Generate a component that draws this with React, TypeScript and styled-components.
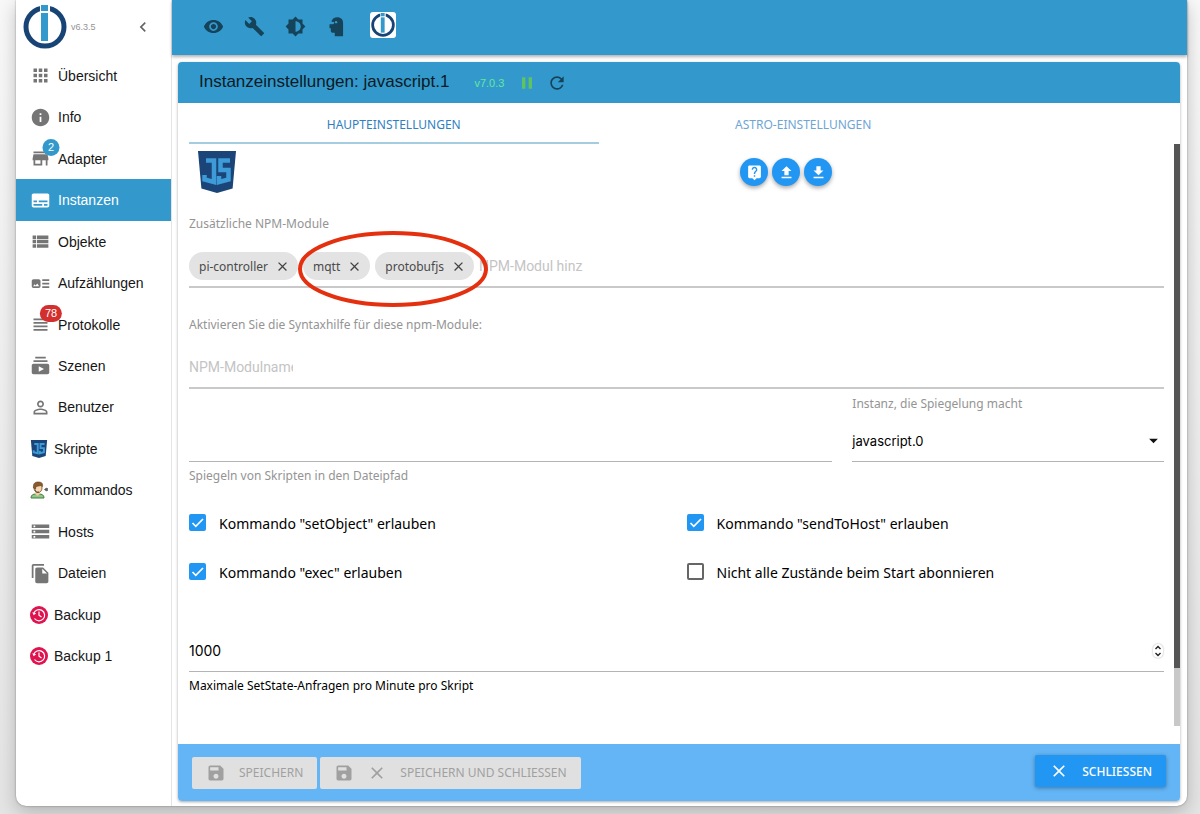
import React from 'react';
import styled, { createGlobalStyle, css } from 'styled-components';
import {
  MdApps,
  MdArrowDropDown,
  MdArtTrack,
  MdBrightness6,
  MdBuild,
  MdChevronLeft,
  MdClose,
  MdFileDownload,
  MdFileUpload,
  MdInfo,
  MdPause,
  MdPersonOutline,
  MdRefresh,
  MdStorage,
  MdViewHeadline,
  MdViewList,
  MdVisibility,
} from 'react-icons/md';

const sans = '"Liberation Sans", Arial, sans-serif';
const humanist = '"Noto Sans", "Open Sans", sans-serif';

const GlobalStyle = createGlobalStyle`
  * { box-sizing: border-box; }
  body {
    margin: 0;
    background: #f3f3f3;
    font-family: ${sans};
    color: #111;
  }
  button, input, select { font: inherit; color: inherit; }
  ul { list-style: none; margin: 0; padding: 0; }
`;

const Page = styled.div`
  display: flex;
  min-height: 100vh;
  padding: 0 13px 8px 16px;
  background: linear-gradient(to bottom, #f8f8f8, #ececec 60%, #e4e4e4);
`;

const AppWindow = styled.div`
  display: flex;
  flex: 1;
  min-width: 0;
  background: #fff;
  border-radius: 0 0 10px 10px;
  box-shadow: 0 0 2px rgba(0, 0, 0, 0.4), 0 6px 18px rgba(0, 0, 0, 0.22);
`;

/* Sidebar */

const Sidebar = styled.nav`
  flex: none;
  width: 156px;
  border-right: 1px solid #e4e4e4;
`;

const SidebarHeader = styled.div`
  display: flex;
  align-items: center;
  height: 55px;
  padding: 0 18px 2px 7px;
`;

const AppVersion = styled.span`
  flex: 1;
  padding-left: 4px;
  font-size: 9px;
  color: #949494;
`;

const CollapseButton = styled.button`
  display: flex;
  padding: 0;
  border: 0;
  background: none;
  color: #666;
  font-size: 20px;
`;

const MenuList = styled.ul`
  display: grid;
  grid-auto-rows: 1fr;
  min-height: 622px;
`;

const MenuLink = styled.a<{ $active?: boolean; $instance?: boolean }>`
  display: flex;
  align-items: center;
  gap: ${p => (p.$instance ? 6 : 7)}px;
  height: 100%;
  padding-left: 14px;
  font-size: 14px;
  text-decoration: none;
  color: ${p => (p.$active ? '#fff' : '#161616')};
  background: ${p => (p.$active ? '#3399cc' : 'transparent')};
`;

const MenuIcon = styled.span<{ $active?: boolean }>`
  position: relative;
  display: flex;
  color: ${p => (p.$active ? '#fff' : '#757575')};
  font-size: 21px;
`;

const Badge = styled.span<{ $color: string }>`
  position: absolute;
  left: 100%;
  top: -9px;
  min-width: 17px;
  height: 17px;
  padding: 0 5px;
  border-radius: 9px;
  background: ${p => p.$color};
  color: #fff;
  font-size: 11px;
  line-height: 17px;
  text-align: center;
  transform: translateX(-50%);
`;

/* Main area */

const Main = styled.main`
  display: flex;
  flex-direction: column;
  flex: 1;
  min-width: 0;
`;

const Toolbar = styled.header`
  display: flex;
  align-items: center;
  gap: 20px;
  height: 55px;
  padding: 0 0 2px 31px;
  background: #3399cc;
  color: #15435a;
  box-shadow: 0 2px 3px rgba(0, 0, 0, 0.3);
`;

const ToolButton = styled.button`
  display: flex;
  padding: 0;
  border: 0;
  background: none;
  font-size: 21px;
`;

const HostLogo = styled.a`
  display: flex;
  margin: 0 0 4px 3px;
  padding: 1px;
  border-radius: 3px;
  background: #fff;
`;

const Card = styled.section`
  display: flex;
  flex-direction: column;
  flex: 1;
  margin: 7px 7px 5px 6px;
  border-radius: 4px;
  box-shadow: 0 1px 3px rgba(0, 0, 0, 0.35);
`;

const CardHeader = styled.div`
  display: flex;
  align-items: center;
  height: 41px;
  padding-left: 21px;
  border-radius: 4px 4px 0 0;
  background: #3399cc;
`;

const CardTitle = styled.h1`
  margin: 0 25px 2px 0;
  font-size: 17px;
  font-weight: 400;
  color: #0b1a24;
`;

const InstanceVersion = styled.span`
  margin-right: 13px;
  font-size: 11px;
  color: #62e89a;
`;

const HeaderButton = styled.button<{ $color: string }>`
  display: flex;
  margin-right: 10px;
  padding: 0;
  border: 0;
  background: none;
  color: ${p => p.$color};
  font-size: 20px;
`;

const CardBody = styled.div`
  display: flex;
  flex: 1;
  padding-left: 11px;
  font-family: ${humanist};
`;

const Content = styled.div`
  flex: 1;
  min-width: 0;
`;

const ScrollTrack = styled.div`
  display: flex;
  flex-direction: column;
  width: 6px;
  margin: 41px 0 18px 10px;
  background: #c8c8c8;
`;

const ScrollThumb = styled.div`
  height: 90%;
  background: #555;
`;

const Tabs = styled.div`
  display: flex;
  height: 41px;
`;

const Tab = styled.button<{ $active?: boolean }>`
  width: 42%;
  padding: 3px 0 0;
  border: 0;
  border-bottom: 2px solid ${p => (p.$active ? '#a5cde2' : 'transparent')};
  background: none;
  font-size: 12px;
  color: ${p => (p.$active ? '#2f7fc1' : '#6fa5d4')};
`;

const LogoRow = styled.div`
  display: grid;
  grid-template-columns: 552fr 424fr;
  align-items: center;
  height: 56px;
`;

const AdapterLogo = styled.div`
  display: flex;
  padding-left: 9px;
`;

const RoundButtons = styled.div`
  display: flex;
  gap: 4px;
`;

const RoundButton = styled.button`
  display: grid;
  place-items: center;
  width: 28px;
  height: 28px;
  padding: 0;
  border: 0;
  border-radius: 50%;
  background: #2196f3;
  color: #fff;
  font-size: 17px;
  box-shadow: 0 2px 4px rgba(0, 0, 0, 0.35);
`;

const Caption = styled.label`
  display: block;
  font-size: 12px;
  line-height: 16px;
  color: #949494;
`;

const ModuleField = styled.div<{ $tall?: boolean }>`
  padding-top: ${p => (p.$tall ? 29 : 16)}px;
`;

const ChipLine = styled.div`
  position: relative;
  display: flex;
  align-items: center;
  gap: 5px;
  height: 56px;
  padding-top: 14px;
  border-bottom: 2px solid #c9c9c9;
`;

const Chip = styled.span`
  display: flex;
  align-items: center;
  gap: 7px;
  height: 28px;
  padding: 0 8px 0 10px;
  border-radius: 14px;
  background: #e3e3e3;
  color: #4a4a4a;
  font-size: 12px;
`;

const ChipRemove = styled.button`
  display: flex;
  padding: 0;
  border: 0;
  background: none;
  color: #444;
  font-size: 15px;
`;

const ModuleInput = styled.input`
  width: 104px;
  padding: 0;
  border: 0;
  outline: 0;
  background: none;
  font-family: Roboto, ${humanist};
  font-size: 14px;
  &::placeholder { color: #c4c4c4; opacity: 1; }
`;

const Marker = styled.svg`
  position: absolute;
  left: 108px;
  top: -3px;
  pointer-events: none;
`;

const MirrorRow = styled.div`
  display: grid;
  grid-template-columns: repeat(3, 1fr);
  column-gap: 20px;
  padding-top: 7px;
`;

const MirrorField = styled.div<{ $span?: number }>`
  display: flex;
  flex-direction: column;
  grid-column: span ${p => p.$span ?? 1};
`;

const lineControl = css`
  width: 100%;
  padding: 0;
  border: 0;
  outline: 0;
  background: none;
  font-size: 14px;
  color: #000;
`;

const PathInput = styled.input`
  ${lineControl}
  height: 66px;
  margin-bottom: 6px;
  padding-top: 24px;
  border-bottom: 1px solid #b4b4b4;
`;

const SelectWrap = styled.div`
  display: grid;
  grid-template-columns: 1fr 21px;
  align-items: center;
  height: 50px;
  padding-top: 8px;
  border-bottom: 1px solid #b4b4b4;
`;

const Select = styled.select`
  ${lineControl}
  grid-area: 1 / 1 / 2 / 3;
  height: 30px;
  appearance: none;
  font-family: Inter, ${humanist};
  font-size: 13px;
`;

const SelectArrow = styled(MdArrowDropDown)`
  grid-area: 1 / 2;
  font-size: 21px;
  pointer-events: none;
`;

const CheckGrid = styled.div`
  display: grid;
  grid-template-columns: 1fr 1fr;
  gap: 30px 20px;
  padding-top: 30px;
`;

const CheckLabel = styled.label`
  display: flex;
  align-items: center;
  gap: 13px;
  font-size: 14px;
  line-height: 19px;
  color: #000;
`;

const CheckBox = styled.span`
  display: grid;
  width: 17px;
  height: 17px;
  margin-bottom: 2px;
  input {
    grid-area: 1 / 1;
    appearance: none;
    width: 17px;
    height: 17px;
    margin: 0;
    border: 2px solid #666;
    border-radius: 2px;
  }
  input:checked { border-color: #2196f3; background: #2196f3; }
  svg { grid-area: 1 / 1; visibility: hidden; pointer-events: none; }
  input:checked + svg { visibility: visible; }
`;

const NumberField = styled.div`
  padding-top: 48px;
`;

const NumberLine = styled.div`
  display: flex;
  align-items: center;
  height: 42px;
  margin-bottom: 6px;
  border-bottom: 1px solid #b4b4b4;
`;

const NumberInput = styled.input`
  ${lineControl}
  appearance: textfield;
  font-family: Inter, ${humanist};
  &::-webkit-inner-spin-button { appearance: none; margin: 0; }
`;

const Stepper = styled.div`
  display: flex;
  flex-direction: column;
  margin-right: 1px;
  border-radius: 5px;
  box-shadow: 0 0 2px rgba(0, 0, 0, 0.35);
`;

const StepButton = styled.button`
  display: grid;
  place-items: center;
  width: 10px;
  height: 7px;
  padding: 0;
  border: 0;
  background: none;
`;

const HelperText = styled(Caption)`
  color: #000;
`;

/* Footer */

const Footer = styled.footer`
  display: flex;
  align-items: center;
  gap: 3px;
  height: 57px;
  padding: 0 14px;
  border-radius: 0 0 4px 4px;
  background: #64b5f6;
  font-family: ${humanist};
`;

const FooterButton = styled.button<{ $primary?: boolean }>`
  display: flex;
  align-items: center;
  gap: 13px;
  height: 32px;
  padding: 0 14px;
  border: 0;
  border-radius: 2px;
  background: #e0e0e0;
  color: #a0a0a0;
  font-size: 12px;
  white-space: nowrap;
  svg { font-size: 20px; }
  ${p =>
    p.$primary &&
    css`
      margin: 0 0 3px auto;
      background: #2196f3;
      color: #fff;
      font-weight: 500;
      box-shadow: 0 1px 4px rgba(0, 0, 0, 0.35);
    `}
`;

/* Drawings */

const Glyph = ({ d }: { d: string }) => (
  <svg width="1em" height="1em" viewBox="0 0 24 24" fill="currentColor" aria-hidden="true">
    <path d={d} />
  </svg>
);

const storePath = 'M20 4H4v2h16V4zm1 10v-2l-1-5H4l-1 5v2h1v6h10v-6h4v6h2v-6h1zm-9 4H6v-4h6v4z';
const subtitlesPath =
  'M20 4H4c-1.100 0-2 .9-2 2v12c0 1.100.9 2 2 2h16c1.100 0 2-.9 2-2V6c0-1.100-.9-2-2-2zM4 12h4v2H4v-2zm10 6H4v-2h10v2zm6 0h-4v-2h4v2zm0-4H10v-2h10v2z';
const subscriptionsPath =
  'M20 8H4V6h16v2zm-2-6H6v2h12V2zm4 10v8c0 1.100-.9 2-2 2H4c-1.100 0-2-.9-2-2v-8c0-1.100.9-2 2-2h16c1.100 0 2 .9 2 2zm-6 4l-6-3.270v6.530L16 16z';
const filesPath =
  'M16 1H4c-1.100 0-2 .9-2 2v14h2V3h12V1zm-1 4l6 6v10c0 1.100-.9 2-2 2H8c-1.100 0-2-.9-2-2V7c0-1.100.9-2 2-2h7zm-1 7h5.500L14 6.500V12z';
const helpPath =
  'M19 2H5c-1.110 0-2 .9-2 2v14c0 1.100.890 2 2 2h4l3 3 3-3h4c1.100 0 2-.9 2-2V4c0-1.100-.9-2-2-2zm-6 16h-2v-2h2v2zm2.070-7.750l-.9.920C13.450 11.900 13 12.500 13 14h-2v-.5c0-1.100.450-2.100 1.170-2.830l1.240-1.260c.370-.360.590-.860.590-1.410 0-1.100-.9-2-2-2s-2 .9-2 2H8c0-2.210 1.790-4 4-4s4 1.790 4 4c0 .880-.360 1.680-.930 2.250z';
const savePath =
  'M17 3H5c-1.110 0-2 .9-2 2v14c0 1.100.890 2 2 2h14c1.100 0 2-.9 2-2V7l-4-4zm-5 16c-1.660 0-3-1.340-3-3s1.340-3 3-3 3 1.340 3 3-1.340 3-3 3zm3-10H5V5h10v4z';

const BrokerLogo = ({ size }: { size: number }) => (
  <svg width={size} height={size} viewBox="0 0 44 44" aria-hidden="true">
    <circle cx="22" cy="22" r="19" fill="none" stroke="#174475" strokeWidth="5" />
    <rect x="17" y="0" width="10" height="8" fill="#fff" />
    <rect x="16" y="8" width="12" height="28" fill="#fff" />
    <rect x="18" y="0" width="7" height="6" fill="#3399cc" />
    <rect x="18" y="8" width="7" height="28" fill="#3399cc" />
  </svg>
);

const JsShield = ({ width, height }: { width: number; height: number }) => (
  <svg width={width} height={height} viewBox="0 0 38 42" aria-hidden="true">
    <path d="M0 0h38l-3.400 37.500L19 42 3.400 37.500z" fill="#1b4478" />
    <path
      d="M8 9.500H16V31L6.500 28.500V24M32 9.500H22.500V19H30.500V28.500L21 31V25"
      fill="none"
      stroke="#3d9bd8"
      strokeWidth="4.500"
    />
  </svg>
);

const CommandIcon = () => (
  <svg width="18" height="18" viewBox="0 0 18 18" aria-hidden="true">
    <path d="M1 17c0-3 2-4 5-4h3c3 0 5 1 5 4z" fill="#8bc98a" stroke="#4b7a3c" />
    <path d="M5 10h5v3l-2.500 2L5 13z" fill="#f2c9a0" />
    <ellipse cx="8" cy="7" rx="4" ry="4.600" fill="#f7d5b0" stroke="#7a4a20" strokeWidth=".8" />
    <path d="M3.500 7C3 3 4.500 1 8 1c4 0 5 1.500 4.500 4.500L11 4.500 6 5.500 5.500 8z" fill="#8a5a2b" stroke="#5a3a1a" strokeWidth=".6" />
    <path d="M5 8.500c0 2 2 3 4 2.500" fill="none" stroke="#444" />
    <path d="M14.500 8.500l2-1.500v3zM17.500 7v3" fill="#555" stroke="#555" strokeWidth=".8" />
  </svg>
);

const BackupIcon = () => (
  <svg width="18" height="18" viewBox="0 0 18 18" aria-hidden="true">
    <circle cx="9" cy="9" r="9" fill="#e0134f" />
    <path d="M3.700 7.500a5.600 5.600 0 1 1 .8 5" fill="none" stroke="#fff" strokeWidth="1.200" />
    <path d="M2.300 6.300l1.300 3 2.600-2z" fill="#fff" />
    <path d="M9 5.500V9.300L11.500 11" fill="none" stroke="#fff" strokeWidth="1.200" />
  </svg>
);

const ExpertIcon = () => (
  <svg width="1em" height="1em" viewBox="0 0 24 24" aria-hidden="true">
    <path
      d="M13 1.500C9.500 1.500 7 3.300 6.200 6.200L8 7.500 7.500 9.500 4 9.500V14h1.500v3c0 1.200.8 2 2 2H10v4h9.500V8c0-4-2.500-6.500-6.500-6.500z"
      fill="currentColor"
    />
    <circle cx="8" cy="8" r="1.300" fill="#3399cc" />
    <circle cx="11.500" cy="7" r="1.400" fill="#3399cc" />
  </svg>
);

const Tick = () => (
  <svg width="17" height="17" viewBox="0 0 17 17" aria-hidden="true">
    <path d="M3.500 9l3.300 3.300L14 5" fill="none" stroke="#fff" strokeWidth="1.700" />
  </svg>
);

const Chevron = ({ up }: { up?: boolean }) => (
  <svg width="8" height="5" viewBox="0 0 8 5" aria-hidden="true">
    <path d={up ? 'M1.500 4L4 1.500 6.500 4' : 'M1.500 1L4 3.500 6.500 1'} fill="none" stroke="#222" strokeWidth="1.400" />
  </svg>
);

type MenuEntry = {
  label: string;
  icon: React.ReactNode;
  active?: boolean;
  instance?: boolean;
  badge?: { text: string; color: string };
};

const menu: MenuEntry[] = [
  { label: 'Übersicht', icon: <MdApps /> },
  { label: 'Info', icon: <MdInfo /> },
  { label: 'Adapter', icon: <Glyph d={storePath} />, badge: { text: '2', color: '#3399cc' } },
  { label: 'Instanzen', icon: <Glyph d={subtitlesPath} />, active: true },
  { label: 'Objekte', icon: <MdViewList /> },
  { label: 'Aufzählungen', icon: <MdArtTrack /> },
  { label: 'Protokolle', icon: <MdViewHeadline />, badge: { text: '78', color: '#d32f2f' } },
  { label: 'Szenen', icon: <Glyph d={subscriptionsPath} /> },
  { label: 'Benutzer', icon: <MdPersonOutline /> },
  { label: 'Skripte', icon: <JsShield width={18} height={18} />, instance: true },
  { label: 'Kommandos', icon: <CommandIcon />, instance: true },
  { label: 'Hosts', icon: <MdStorage /> },
  { label: 'Dateien', icon: <Glyph d={filesPath} /> },
  { label: 'Backup', icon: <BackupIcon />, instance: true },
  { label: 'Backup 1', icon: <BackupIcon />, instance: true },
];

const tools = [
  { label: 'Sichtbarkeit', icon: <MdVisibility /> },
  { label: 'Werkzeuge', icon: <MdBuild /> },
  { label: 'Farbschema', icon: <MdBrightness6 /> },
  { label: 'Expertenmodus', icon: <ExpertIcon /> },
];

const options = [
  { label: 'Kommando "setObject" erlauben', checked: true },
  { label: 'Kommando "sendToHost" erlauben', checked: true },
  { label: 'Kommando "exec" erlauben', checked: true },
  { label: 'Nicht alle Zustände beim Start abonnieren', checked: false },
];

export default function App() {
  return (
    <>
      <GlobalStyle />
      <Page>
        <AppWindow>
          <Sidebar>
            <SidebarHeader>
              <BrokerLogo size={44} />
              <AppVersion>v6.3.5</AppVersion>
              <CollapseButton aria-label="Menü einklappen">
                <MdChevronLeft />
              </CollapseButton>
            </SidebarHeader>
            <MenuList>
              {menu.map(m => (
                <li key={m.label}>
                  <MenuLink href="#" $active={m.active} $instance={m.instance}>
                    <MenuIcon $active={m.active}>
                      {m.icon}
                      {m.badge && <Badge $color={m.badge.color}>{m.badge.text}</Badge>}
                    </MenuIcon>
                    {m.label}
                  </MenuLink>
                </li>
              ))}
            </MenuList>
          </Sidebar>

          <Main>
            <Toolbar>
              {tools.map(t => (
                <ToolButton key={t.label} aria-label={t.label}>
                  {t.icon}
                </ToolButton>
              ))}
              <HostLogo href="#" aria-label="Host">
                <BrokerLogo size={24} />
              </HostLogo>
            </Toolbar>

            <Card>
              <CardHeader>
                <CardTitle>Instanzeinstellungen: javascript.1</CardTitle>
                <InstanceVersion>v7.0.3</InstanceVersion>
                <HeaderButton $color="#5fc35f" aria-label="Anhalten">
                  <MdPause />
                </HeaderButton>
                <HeaderButton $color="#15435a" aria-label="Neu starten">
                  <MdRefresh />
                </HeaderButton>
              </CardHeader>

              <CardBody>
                <Content>
                  <Tabs role="tablist">
                    <Tab role="tab" aria-selected="true" $active>
                      HAUPTEINSTELLUNGEN
                    </Tab>
                    <Tab role="tab" aria-selected="false">
                      ASTRO-EINSTELLUNGEN
                    </Tab>
                  </Tabs>

                  <LogoRow>
                    <AdapterLogo>
                      <JsShield width={38} height={42} />
                    </AdapterLogo>
                    <RoundButtons>
                      <RoundButton aria-label="Hilfe">
                        <Glyph d={helpPath} />
                      </RoundButton>
                      <RoundButton aria-label="Hochladen">
                        <MdFileUpload />
                      </RoundButton>
                      <RoundButton aria-label="Herunterladen">
                        <MdFileDownload />
                      </RoundButton>
                    </RoundButtons>
                  </LogoRow>

                  <ModuleField>
                    <Caption htmlFor="npm">Zusätzliche NPM-Module</Caption>
                    <ChipLine>
                      {['pi-controller', 'mqtt', 'protobufjs'].map(name => (
                        <Chip key={name}>
                          {name}
                          <ChipRemove aria-label={`${name} entfernen`}>
                            <MdClose />
                          </ChipRemove>
                        </Chip>
                      ))}
                      <ModuleInput id="npm" placeholder="NPM-Modul hinz" />
                      <Marker width="192" height="80" viewBox="0 0 192 80" aria-hidden="true">
                        <ellipse cx="96" cy="40" rx="93" ry="36" fill="none" stroke="#e5300f" strokeWidth="4" />
                      </Marker>
                    </ChipLine>
                  </ModuleField>

                  <ModuleField $tall>
                    <Caption htmlFor="syntax">Aktivieren Sie die Syntaxhilfe für diese npm-Module:</Caption>
                    <ChipLine>
                      <ModuleInput id="syntax" placeholder="NPM-Modulname" />
                    </ChipLine>
                  </ModuleField>

                  <MirrorRow>
                    <MirrorField $span={2}>
                      <PathInput id="mirror" />
                      <Caption htmlFor="mirror">Spiegeln von Skripten in den Dateipfad</Caption>
                    </MirrorField>
                    <MirrorField>
                      <Caption htmlFor="instance">Instanz, die Spiegelung macht</Caption>
                      <SelectWrap>
                        <Select id="instance">
                          <option>javascript.0</option>
                        </Select>
                        <SelectArrow />
                      </SelectWrap>
                    </MirrorField>
                  </MirrorRow>

                  <CheckGrid>
                    {options.map(o => (
                      <CheckLabel key={o.label}>
                        <CheckBox>
                          <input type="checkbox" defaultChecked={o.checked} />
                          <Tick />
                        </CheckBox>
                        {o.label}
                      </CheckLabel>
                    ))}
                  </CheckGrid>

                  <NumberField>
                    <NumberLine>
                      <NumberInput id="limit" type="number" defaultValue={1000} />
                      <Stepper>
                        <StepButton aria-label="Erhöhen">
                          <Chevron up />
                        </StepButton>
                        <StepButton aria-label="Verringern">
                          <Chevron />
                        </StepButton>
                      </Stepper>
                    </NumberLine>
                    <HelperText htmlFor="limit">Maximale SetState-Anfragen pro Minute pro Skript</HelperText>
                  </NumberField>
                </Content>
                <ScrollTrack>
                  <ScrollThumb />
                </ScrollTrack>
              </CardBody>

              <Footer>
                <FooterButton disabled>
                  <Glyph d={savePath} />
                  SPEICHERN
                </FooterButton>
                <FooterButton disabled>
                  <Glyph d={savePath} />
                  <MdClose />
                  SPEICHERN UND SCHLIESSEN
                </FooterButton>
                <FooterButton $primary>
                  <MdClose />
                  SCHLIESSEN
                </FooterButton>
              </Footer>
            </Card>
          </Main>
        </AppWindow>
      </Page>
    </>
  );
}
